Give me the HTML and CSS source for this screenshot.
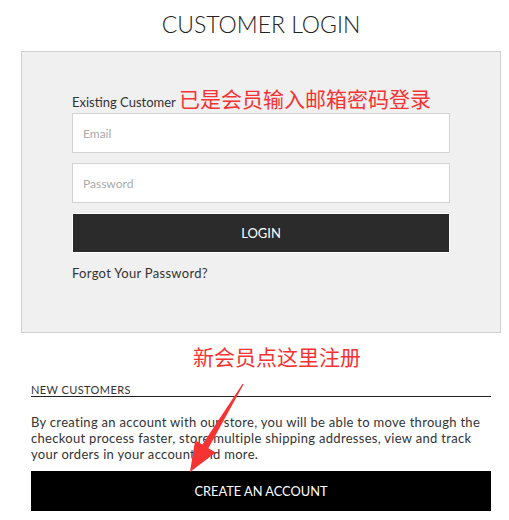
FILE: index.html
```html
<!DOCTYPE html>
<html lang="en">
<head>
    <meta charset="UTF-8">
    <meta name="viewport" content="width=device-width, initial-scale=1.0">
    <title>Customer Login</title>
    <link rel="stylesheet" href="styles.css">
</head>
<body>
    <div class="page">
        <h1 class="page-title">CUSTOMER LOGIN</h1>

        <div class="login-box">
            <div class="login-label">
                Existing Customer <span class="note">已是会员输入邮箱密码登录</span>
            </div>
            <input class="field" type="text" placeholder="Email">
            <input class="field" type="password" placeholder="Password">
            <button class="login-button">LOGIN</button>
            <a class="forgot-link" href="#">Forgot Your Password?</a>
        </div>

        <div class="new-customers">
            <div class="note note-register">新会员点这里注册</div>
            <h2 class="section-title">NEW CUSTOMERS</h2>
            <p class="section-text">By creating an account with our store, you will be able to move through the checkout process faster, store multiple shipping addresses, view and track your orders in your account and more.</p>
            <button class="create-button">CREATE AN ACCOUNT</button>
        </div>

        <!-- red annotation arrow drawn over the text -->
        <svg class="arrow" width="509" height="520" viewBox="0 0 509 520">
            <polygon fill="#f53333" points="243.6,384.3 208.4,448.2 215.7,452.6 190,472 195.1,440.2 202.4,444.6 242.6,383.7"/>
        </svg>
    </div>
</body>
</html>
```

FILE: styles.css
```css
* {
    margin: 0;
    padding: 0;
    box-sizing: border-box;
    font-family: Lato, 'Noto Sans CJK SC', sans-serif;
}

body {
    background-color: #fff;
    color: #333;
}

.page {
    position: relative;
    width: 480px;
    margin-left: 21px;
}

.page-title {
    font-size: 23px;
    font-weight: 300;
    color: #222;
    text-align: center;
    line-height: 30px;
    padding-top: 9px;
    margin-bottom: 12px;
}

.login-box {
    background-color: #f0f0f0;
    border: 1px solid #d0d0d0;
    padding: 35px 50px 49px 50px;
    display: flex;
    flex-direction: column;
}

.login-label {
    height: 26px;
    font-size: 13px;
    line-height: 22px;
    color: #333;
}

.note {
    font-family: 'Noto Sans CJK SC', sans-serif;
    color: #f53333;
    font-size: 21px;
    line-height: 22px;
}

.field {
    height: 40px;
    border: 1px solid #d3d3d3;
    background: #fff;
    padding: 0 10px;
    font-size: 12px;
    margin-bottom: 10px;
    outline: none;
}

.field::placeholder {
    color: #aaa;
}

.login-button {
    height: 40px;
    background-color: #2b2b2b;
    border: 1px solid #fff;
    color: #fff;
    font-size: 13px;
    cursor: pointer;
}

.forgot-link {
    margin-top: 10px;
    font-size: 13px;
    line-height: 20px;
    letter-spacing: 0.3px;
    color: #333;
    text-decoration: none;
}

.new-customers {
    padding: 0 10px;
}

.note-register {
    margin-top: 9px;
    padding-left: 162px;
    line-height: 28px;
}

.section-title {
    font-size: 11px;
    font-weight: 400;
    letter-spacing: 0.4px;
    color: #333;
    line-height: 13px;
    padding-top: 2px;
    margin-top: 11px;
    border-bottom: 1px solid #222;
}

.section-text {
    margin-top: 17px;
    font-size: 13px;
    line-height: 16px;
    letter-spacing: 0.3px;
    color: #333;
}

.create-button {
    display: block;
    width: 100%;
    height: 40px;
    margin-top: 9px;
    background-color: #000;
    border: none;
    color: #fff;
    font-size: 12.8px;
    cursor: pointer;
}

.arrow {
    position: absolute;
    top: 0;
    left: -21px;
    pointer-events: none;
}
```
